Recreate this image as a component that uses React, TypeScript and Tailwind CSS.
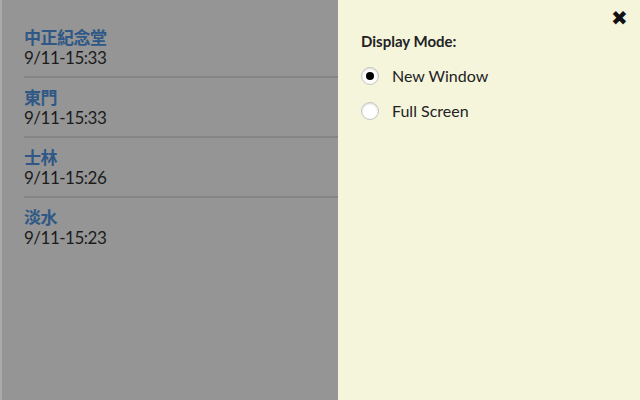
import React, { useState } from "react";

// Records shown in the dimmed list behind the settings panel
const stations = [
  { name: "中正紀念堂", time: "9/11-15:33" },
  { name: "東門", time: "9/11-15:33" },
  { name: "士林", time: "9/11-15:26" },
  { name: "淡水", time: "9/11-15:23" },
];

const font = { fontFamily: "Lato, 'Noto Sans CJK TC', sans-serif" };

const App: React.FC = () => {
  const [mode, setMode] = useState("new");

  return (
    <div className="flex w-[640px] h-[400px] overflow-hidden" style={font}>
      {/* Dimmed list */}
      <div className="w-[338px] h-full bg-[#959595] border-l-2 border-[#ababab] pl-[22px] pt-[18px]">
        {stations.map((s) => (
          <div key={s.name} className="pt-[10px] pb-[8px] border-b-2 border-[#858585] last:border-b-0">
            <p className="text-[17px] leading-[20px] tracking-[-0.5px] font-bold text-[#2f5886]">{s.name}</p>
            <p className="text-[17px] leading-[20px] tracking-[-0.5px] text-[#1c1c1c]">{s.time}</p>
          </div>
        ))}
      </div>

      {/* Settings panel */}
      <div className="relative flex-1 h-full bg-[#f5f5dc] pl-[23px] pt-[30px]">
        <button className="absolute right-[12px] top-[7px] text-[20px] leading-none text-[#111]">
          ✖
        </button>
        <p className="text-[15px] leading-[22px] font-bold text-[#222]">Display Mode:</p>
        <div className="mt-[13px] flex flex-col gap-[13px]">
          {[
            { id: "new", label: "New Window" },
            { id: "full", label: "Full Screen" },
          ].map((o) => (
            <label key={o.id} className="flex items-center gap-[13px] cursor-pointer" onClick={() => setMode(o.id)}>
              <span className="flex w-[18px] h-[18px] items-center justify-center rounded-full bg-white border border-[#c4c4c4] shadow-[inset_0_1px_2px_rgba(0,0,0,0.15)]">
                {mode === o.id && <span className="w-[8px] h-[8px] rounded-full bg-black" />}
              </span>
              <span className="text-[16px] leading-[22px] text-[#222]">{o.label}</span>
            </label>
          ))}
        </div>
      </div>
    </div>
  );
};

export default App;
